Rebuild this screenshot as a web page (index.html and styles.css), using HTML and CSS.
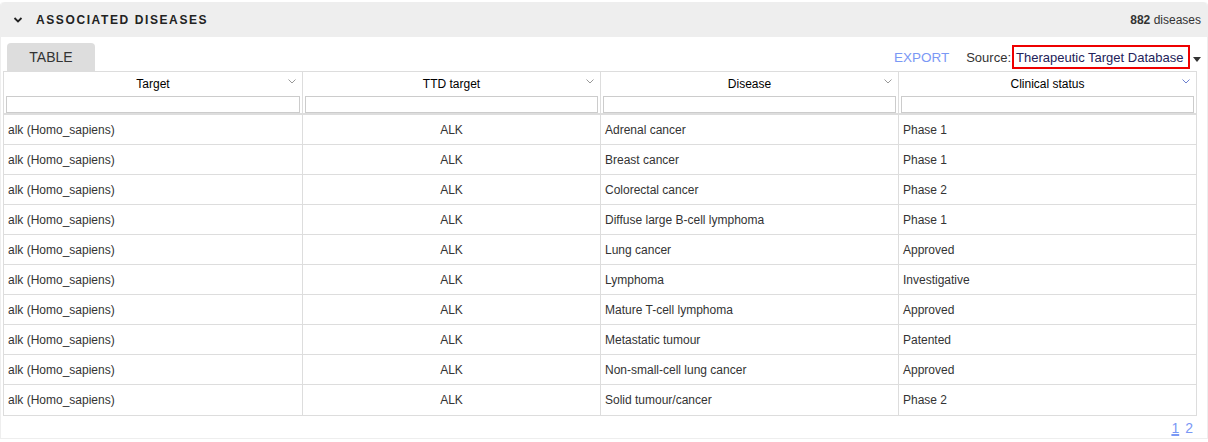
FILE: index.html
```html
<!DOCTYPE html>
<html>
<head>
<meta charset="utf-8">
<link rel="stylesheet" href="styles.css">
</head>
<body>
<div class="card">
  <div class="card-head">
    <div class="head-left">
      <svg class="chev" width="10" height="8" viewBox="0 0 10 8"><path d="M1.5 2 L5 5.5 L8.5 2" fill="none" stroke="#222" stroke-width="1.8"/></svg>
      <span class="title">ASSOCIATED DISEASES</span>
    </div>
    <div class="count"><b>882</b> diseases</div>
  </div>
  <div class="toolbar">
    <div class="tab">TABLE</div>
    <div class="tools">
      <span class="export">EXPORT</span>
      <span class="source-label">Source:</span>
      <span class="source-box">Therapeutic Target Database</span>
      <span class="caret"></span>
    </div>
  </div>
  <div class="grid">
    <div class="hrow">
      <div class="hcell">Target<svg class="sort" width="8" height="5" viewBox="0 0 8 5"><path d="M0.5 0.5 L4 4 L7.5 0.5" fill="none" stroke="#999" stroke-width="1"/></svg></div>
      <div class="hcell">TTD target<svg class="sort" width="8" height="5" viewBox="0 0 8 5"><path d="M0.5 0.5 L4 4 L7.5 0.5" fill="none" stroke="#999" stroke-width="1"/></svg></div>
      <div class="hcell">Disease<svg class="sort" width="8" height="5" viewBox="0 0 8 5"><path d="M0.5 0.5 L4 4 L7.5 0.5" fill="none" stroke="#999" stroke-width="1"/></svg></div>
      <div class="hcell">Clinical status<svg class="sort" width="8" height="5" viewBox="0 0 8 5"><path d="M0.5 0.5 L4 4 L7.5 0.5" fill="none" stroke="#6b7fd0" stroke-width="1"/></svg></div>
    </div>
    <div class="frow">
      <div class="fcell"><div class="finput"></div></div>
      <div class="fcell"><div class="finput"></div></div>
      <div class="fcell"><div class="finput"></div></div>
      <div class="fcell"><div class="finput"></div></div>
    </div>
    <div class="row"><div class="c">alk (Homo_sapiens)</div><div class="c mid">ALK</div><div class="c">Adrenal cancer</div><div class="c">Phase 1</div></div>
    <div class="row"><div class="c">alk (Homo_sapiens)</div><div class="c mid">ALK</div><div class="c">Breast cancer</div><div class="c">Phase 1</div></div>
    <div class="row"><div class="c">alk (Homo_sapiens)</div><div class="c mid">ALK</div><div class="c">Colorectal cancer</div><div class="c">Phase 2</div></div>
    <div class="row"><div class="c">alk (Homo_sapiens)</div><div class="c mid">ALK</div><div class="c">Diffuse large B-cell lymphoma</div><div class="c">Phase 1</div></div>
    <div class="row"><div class="c">alk (Homo_sapiens)</div><div class="c mid">ALK</div><div class="c">Lung cancer</div><div class="c">Approved</div></div>
    <div class="row"><div class="c">alk (Homo_sapiens)</div><div class="c mid">ALK</div><div class="c">Lymphoma</div><div class="c">Investigative</div></div>
    <div class="row"><div class="c">alk (Homo_sapiens)</div><div class="c mid">ALK</div><div class="c">Mature T-cell lymphoma</div><div class="c">Approved</div></div>
    <div class="row"><div class="c">alk (Homo_sapiens)</div><div class="c mid">ALK</div><div class="c">Metastatic tumour</div><div class="c">Patented</div></div>
    <div class="row"><div class="c">alk (Homo_sapiens)</div><div class="c mid">ALK</div><div class="c">Non-small-cell lung cancer</div><div class="c">Approved</div></div>
    <div class="row"><div class="c">alk (Homo_sapiens)</div><div class="c mid">ALK</div><div class="c">Solid tumour/cancer</div><div class="c">Phase 2</div></div>
  </div>
  <div class="pager"><span class="pg cur">1</span><span class="pg">2</span></div>
</div>
</body>
</html>
```
FILE: styles.css
```css
html, body {
  margin: 0;
  padding: 0;
  background: #fff;
}
body {
  font-family: "Liberation Sans", Arial, sans-serif;
  font-size: 12px;
  color: #333;
}
.card {
  margin-top: 2px;
  width: 1208px;
  height: 437px;
  border: 1px solid #eee;
  border-top: none;
  border-radius: 4px 4px 0 0;
  box-sizing: border-box;
}
.card-head {
  height: 35px;
  background: #eeeeee;
  border-radius: 4px 4px 0 0;
  display: flex;
  align-items: center;
  justify-content: space-between;
  padding: 0 6px 0 12px;
}
.head-left {
  display: flex;
  align-items: center;
}
.chev {
  margin-right: 13px;
}
.title {
  font-weight: bold;
  font-size: 12px;
  letter-spacing: 1.6px;
  color: #222;
}
.count {
  font-size: 12px;
  color: #333;
}
.toolbar {
  display: flex;
  justify-content: space-between;
  align-items: flex-end;
  height: 34px;
  padding-left: 6px;
}
.tab {
  width: 88px;
  height: 28px;
  background: #dddddd;
  border-radius: 4px 4px 0 0;
  font-size: 14px;
  color: #333;
  display: flex;
  align-items: center;
  justify-content: center;
}
.tools {
  display: flex;
  align-items: center;
  height: 24px;
  margin-bottom: 2px;
}
.export {
  color: #7a98f5;
  font-size: 13.5px;
  margin-right: 17px;
}
.source-label {
  font-size: 13px;
  color: #333;
  margin-right: 1px;
}
.source-box {
  border: 2px solid #e00;
  box-sizing: border-box;
  height: 24px;
  width: 178px;
  font-size: 13px;
  color: #23235a;
  display: flex;
  align-items: center;
  padding-left: 2px;
}
.caret {
  width: 0;
  height: 0;
  border-left: 4px solid transparent;
  border-right: 4px solid transparent;
  border-top: 5px solid #333;
  margin: 4px 6px 0 3px;
}
.grid {
  margin-left: 2px;
  width: 1194px;
  border: 1px solid #ddd;
  box-sizing: border-box;
}
.hrow, .frow, .row {
  display: grid;
  grid-template-columns: 299px 298px 298px 297px;
}
.hrow {
  height: 24px;
}
.hcell {
  position: relative;
  display: flex;
  align-items: center;
  justify-content: center;
  color: #000;
  border-right: 1px solid #ddd;
}
.hcell:last-child, .fcell:last-child, .c:last-child {
  border-right: none;
}
.sort {
  position: absolute;
  right: 6px;
  top: 7px;
}
.frow {
  height: 17px;
  border-bottom: 2px solid #ddd;
}
.fcell {
  border-right: 1px solid #ddd;
  padding: 0 2px;
}
.finput {
  border: 1px solid #ccc;
  box-sizing: border-box;
  height: 17px;
}
.row {
  height: 30px;
  border-bottom: 1px solid #ddd;
  box-sizing: border-box;
}
.row:last-child {
  border-bottom: none;
}
.c {
  border-right: 1px solid #ddd;
  display: flex;
  align-items: center;
  padding-left: 4px;
  color: #333;
}
.c.mid {
  justify-content: center;
  padding-left: 0;
}
.pager {
  display: flex;
  justify-content: flex-end;
  padding: 4px 14px 0 0;
  gap: 6px;
}
.pg {
  color: #7a98f5;
  font-size: 14px;
}
.pg.cur {
  text-decoration: underline;
  text-decoration-thickness: 2px;
}
```
